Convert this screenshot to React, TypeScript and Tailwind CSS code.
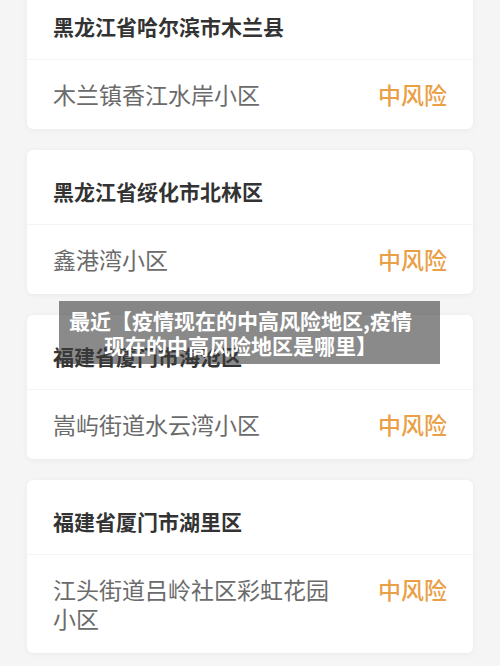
import React from "react";

type Area = {
  region: string;
  place: string;
  level: string;
};

const areas: Area[] = [
  { region: "黑龙江省哈尔滨市木兰县", place: "木兰镇香江水岸小区", level: "中风险" },
  { region: "黑龙江省绥化市北林区", place: "鑫港湾小区", level: "中风险" },
  { region: "福建省厦门市海沧区", place: "嵩屿街道水云湾小区", level: "中风险" },
  { region: "福建省厦门市湖里区", place: "江头街道吕岭社区彩虹花园小区", level: "中风险" },
];

function AreaCard({ area }: { area: Area }) {
  return (
    <div className="bg-white rounded-[6px] shadow-[0_1px_6px_rgba(0,0,0,0.05)]">
      <div className="h-[75px] px-[26px] pt-[29px] border-b border-[#f3f3f3]">
        <p className="text-[21px] leading-[24px] font-bold text-[#333333]">
          {area.region}
        </p>
      </div>
      <div className="flex items-start px-[26px] py-[20px]">
        <p className="flex-1 mr-[40px] text-[23px] leading-[29px] text-[#6b6b6b]">
          {area.place}
        </p>
        <span className="text-[23px] leading-[29px] font-medium text-[#e9a047]">
          {area.level}
        </span>
      </div>
    </div>
  );
}

export default function App() {
  return (
    <div
      className="relative w-[500px] h-[666px] overflow-hidden bg-[#f5f5f5]"
      style={{ fontFamily: '"Noto Sans CJK SC", "Noto Sans", sans-serif' }}
    >
      <div className="flex flex-col gap-[21px] px-[27px] -mt-[15px]">
        {areas.map((a) => (
          <AreaCard key={a.region} area={a} />
        ))}
      </div>

      {/* title overlay */}
      <div className="absolute left-[59px] top-[301px] w-[381px] h-[63px] bg-[rgba(60,60,60,0.6)] flex flex-col items-center justify-center pr-[18px]">
        <p className="text-[21px] leading-[25px] font-bold text-white text-center whitespace-nowrap">
          最近【疫情现在的中高风险地区,疫情
          <br />
          现在的中高风险地区是哪里】
        </p>
      </div>
    </div>
  );
}
